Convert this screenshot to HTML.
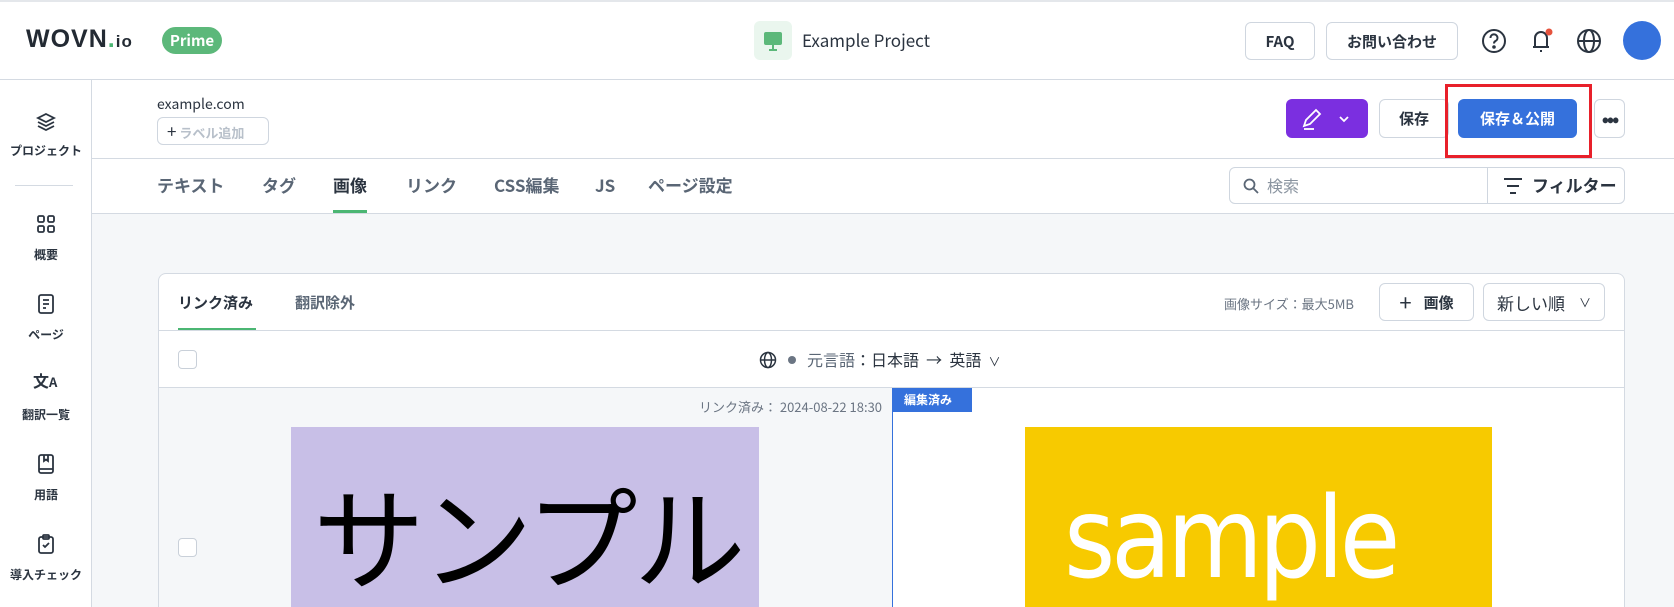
<!DOCTYPE html>
<html style="overflow:hidden;height:607px"><head><meta charset="utf-8"><style>
*{box-sizing:border-box;margin:0;padding:0}
body{width:1674px;height:607px;overflow:hidden;background:#fff;font-family:"Noto Sans CJK JP","Liberation Sans",sans-serif;color:#2b3440;position:relative}
.a{position:absolute}
.btn{position:absolute;border:1px solid #cfd6df;border-radius:6px;background:#fff;display:flex;align-items:center;justify-content:center;font-weight:bold;font-size:15px;color:#2b3440}
.sl{position:absolute;left:0;width:92px;text-align:center;font-size:12px;font-weight:bold;color:#2b3440}
.si{position:absolute;left:34px;width:24px;height:24px}
.tab{position:absolute;top:173px;font-size:17px;line-height:24px;color:#5a6675;font-weight:bold}
.cb{position:absolute;width:19px;height:19px;border:1px solid #c9d0d9;border-radius:4px;background:#fff}
</style></head><body>
<div class="a" style="left:0;top:0;width:1674px;height:2px;background:#e4e7eb"></div>
<div class="a" style="left:26px;top:25px;font-family:'Liberation Sans',sans-serif;font-size:25px;font-weight:bold;letter-spacing:1px;color:#232a33">WOVN<span style="color:#4bb673">.</span><span style="font-size:17px">io</span></div>
<div class="a" style="left:162px;top:27px;width:60px;height:27px;border-radius:14px;background:#5cb87a;color:#fff;font-weight:bold;font-size:15px;text-align:center;line-height:27px">Prime</div>
<div class="a" style="left:754px;top:21px;width:38px;height:39px;border-radius:6px;background:#eaf6ee"></div>
<svg class="a" style="left:762px;top:30px" width="22" height="22" viewBox="0 0 22 22"><rect x="2" y="2" width="18" height="13" rx="2" fill="#5cb87a"/><rect x="10" y="15" width="2" height="4" fill="#5cb87a"/><rect x="7" y="19" width="8" height="2" fill="#5cb87a"/></svg>
<div class="a" style="left:802px;top:27px;font-size:17px;color:#2b3440">Example Project</div>
<div class="btn" style="left:1245px;top:22px;width:70px;height:38px">FAQ</div>
<div class="btn" style="left:1326px;top:22px;width:132px;height:38px">お問い合わせ</div>
<svg class="a" style="left:1481px;top:28px" width="26" height="26" viewBox="0 0 26 26" fill="none" stroke="#2b3440" stroke-width="2"><circle cx="13" cy="13" r="11"/><path d="M9.5 10a3.5 3.5 0 1 1 5 3c-1 .6-1.5 1.2-1.5 2.5"/><circle cx="13" cy="19" r=".8" fill="#2b3440"/></svg>
<svg class="a" style="left:1528px;top:26px" width="28" height="28" viewBox="0 0 28 28" fill="none" stroke="#2b3440" stroke-width="2"><path d="M7 21V12a6 6 0 0 1 12 0v9M5 21h16M12 25h2"/><circle cx="21" cy="6" r="3.5" fill="#e5533d" stroke="none"/></svg>
<svg class="a" style="left:1576px;top:28px" width="26" height="26" viewBox="0 0 26 26" fill="none" stroke="#2b3440" stroke-width="2"><circle cx="13" cy="13" r="11"/><ellipse cx="13" cy="13" rx="5" ry="11"/><path d="M2 13h22"/></svg>
<div class="a" style="left:1623px;top:21px;width:38px;height:39px;border-radius:50%;background:#3571dc"></div>
<div class="a" style="left:0;top:79px;width:1674px;height:1px;background:#d4dae2"></div>
<div class="a" style="left:91px;top:79px;width:1px;height:528px;background:#d4dae2"></div>
<svg class="si" style="top:111px" viewBox="0 0 24 24" fill="none" stroke="#2b3440" stroke-width="1.8"><path d="M12 3l8 4-8 4-8-4z"/><path d="M4 11l8 4 8-4M4 15l8 4 8-4"/></svg>
<div class="sl" style="top:142px">プロジェクト</div>
<div class="a" style="left:15px;top:185px;width:58px;height:1px;background:#d4dae2"></div>
<svg class="si" style="top:212px" viewBox="0 0 24 24" fill="none" stroke="#2b3440" stroke-width="1.8"><rect x="4" y="4" width="6" height="6" rx="1.5"/><rect x="14" y="4" width="6" height="6" rx="1.5"/><rect x="4" y="14" width="6" height="6" rx="1.5"/><rect x="14" y="14" width="6" height="6" rx="1.5"/></svg>
<div class="sl" style="top:246px">概要</div>
<svg class="si" style="top:292px" viewBox="0 0 24 24" fill="none" stroke="#2b3440" stroke-width="1.8"><rect x="5" y="3" width="14" height="18" rx="2"/><path d="M9 8h6M9 12h6M9 16h3"/></svg>
<div class="sl" style="top:326px">ページ</div>
<div class="a" style="left:33px;top:368px;font-size:16px;font-weight:bold;color:#2b3440">文<span style="font-size:13px">A</span></div>
<div class="sl" style="top:406px">翻訳一覧</div>
<svg class="si" style="top:452px" viewBox="0 0 24 24" fill="none" stroke="#2b3440" stroke-width="1.8"><rect x="5" y="3" width="14" height="18" rx="2"/><path d="M5 17h14M10 3v6l2-1.5 2 1.5V3"/></svg>
<div class="sl" style="top:486px">用語</div>
<svg class="si" style="top:532px" viewBox="0 0 24 24" fill="none" stroke="#2b3440" stroke-width="1.8"><rect x="5" y="5" width="14" height="16" rx="2"/><rect x="9" y="3" width="6" height="4" rx="1"/><path d="M9 13l2 2 4-4"/></svg>
<div class="sl" style="top:566px">導入チェック</div>
<div class="a" style="left:157px;top:94px;font-size:14px;color:#2b3440">example.com</div>
<div class="a" style="left:157px;top:117px;width:112px;height:28px;border:1px solid #cfd6df;border-radius:6px;font-size:13px;color:#b8c0ca;font-weight:bold;line-height:26px;padding-left:9px"><span style="color:#2b3440;font-size:17px;font-weight:normal">+</span> ラベル追加</div>
<div class="a" style="left:1286px;top:99px;width:82px;height:39px;border-radius:6px;background:#7b2fe0"></div>
<svg class="a" style="left:1300px;top:107px" width="56" height="24" viewBox="0 0 56 24" fill="none" stroke="#fff" stroke-width="1.8"><path d="M4 19l2-6L16 3l4 4-10 10z"/><path d="M4 22h10"/><path d="M40 10l4 4 4-4"/></svg>
<div class="btn" style="left:1379px;top:99px;width:70px;height:39px">保存</div>
<div class="btn" style="left:1458px;top:99px;width:119px;height:39px;background:#3571dc;border-color:#3571dc;color:#fff">保存＆公開</div>
<div class="a" style="left:1445px;top:84px;width:147px;height:74px;border:3px solid #e8202a"></div>
<div class="btn" style="left:1594px;top:99px;width:31px;height:39px;font-size:19px;letter-spacing:-2px">•••</div>
<div class="a" style="left:92px;top:158px;width:1582px;height:1px;background:#d4dae2"></div>
<div class="tab" style="left:157px">テキスト</div>
<div class="tab" style="left:262px">タグ</div>
<div class="tab" style="left:333px;color:#2b3440">画像</div>
<div class="tab" style="left:406px">リンク</div>
<div class="tab" style="left:494px">CSS編集</div>
<div class="tab" style="left:595px">JS</div>
<div class="tab" style="left:648px">ページ設定</div>
<div class="a" style="left:333px;top:210px;width:34px;height:3px;background:#4bb673"></div>
<div class="a" style="left:1229px;top:167px;width:396px;height:37px;border:1px solid #cfd6df;border-radius:6px"></div>
<div class="a" style="left:1487px;top:167px;width:1px;height:37px;background:#cfd6df"></div>
<svg class="a" style="left:1242px;top:177px" width="18" height="18" viewBox="0 0 18 18" fill="none" stroke="#5a6675" stroke-width="1.8"><circle cx="7.5" cy="7.5" r="5"/><path d="M11 11l5 5"/></svg>
<div class="a" style="left:1267px;top:173px;font-size:16px;color:#8a94a0">検索</div>
<svg class="a" style="left:1502px;top:175px" width="22" height="22" viewBox="0 0 22 22" stroke="#2b3440" stroke-width="2"><path d="M2 4h18M5 11h12M8 18h6"/></svg>
<div class="a" style="left:1532px;top:172px;font-size:17px;font-weight:bold;color:#2b3440">フィルター</div>
<div class="a" style="left:92px;top:213px;width:1582px;height:1px;background:#d4dae2"></div>
<div class="a" style="left:92px;top:214px;width:1582px;height:393px;background:#f5f7f9"></div>
<div class="a" style="left:158px;top:273px;width:1467px;height:334px;background:#fff;border:1px solid #d4dae2;border-bottom:none;border-radius:8px 8px 0 0;overflow:hidden">
  <div class="a" style="left:19px;top:18px;font-size:15px;font-weight:bold;color:#2b3440">リンク済み</div>
  <div class="a" style="left:19px;top:54px;width:78px;height:2px;background:#4bb673"></div>
  <div class="a" style="left:136px;top:18px;font-size:15px;font-weight:bold;color:#5a6675">翻訳除外</div>
  <div class="a" style="left:1065px;top:20px;font-size:13px;color:#6b7583">画像サイズ：最大5MB</div>
  <div class="btn" style="left:1220px;top:9px;width:95px;height:38px;font-size:15px"><span style="font-size:22px;font-weight:normal;margin-right:12px">+</span>画像</div>
  <div class="btn" style="left:1324px;top:9px;width:122px;height:38px;font-weight:normal;font-size:17px">新しい順<span style="font-size:12px;margin-left:14px">∨</span></div>
  <div class="a" style="left:0;top:56px;width:1467px;height:1px;background:#d4dae2"></div>
  <div class="cb" style="left:19px;top:76px"></div>
  <svg class="a" style="left:600px;top:76px" width="40" height="20" viewBox="0 0 40 20" fill="none" stroke="#2b3440" stroke-width="1.5"><circle cx="9" cy="10" r="7.5"/><ellipse cx="9" cy="10" rx="3.5" ry="7.5"/><path d="M1.5 10h15"/><circle cx="33" cy="10" r="4" fill="#6b7583" stroke="none"/></svg>
  <div class="a" style="left:648px;top:73px;font-size:16px;color:#2b3440"><span style="color:#5a6675">元言語</span>：日本語 &nbsp;→&nbsp; 英語 &nbsp;<span style="font-size:12px">∨</span></div>
  <div class="a" style="left:0;top:113px;width:1467px;height:1px;background:#d4dae2"></div>
  <div class="a" style="left:0;top:114px;width:733px;height:220px;background:#f5f7f9"></div>
  <div class="a" style="left:733px;top:114px;width:1px;height:220px;background:#3571dc"></div>
  <div class="a" style="left:733px;top:114px;width:80px;height:24px;background:#3571dc;color:#fff;font-size:12px;font-weight:bold;line-height:24px;padding-left:12px">編集済み</div>
  <div class="a" style="left:490px;top:123px;width:233px;text-align:right;font-size:13px;color:#6b7583">リンク済み： 2024-08-22 18:30</div>
  <div class="cb" style="left:19px;top:264px"></div>
  <div class="a" style="left:132px;top:153px;width:468px;height:181px;background:#c8bfe7;overflow:hidden"><div class="a" style="left:22px;top:50px;font-size:112px;color:#000;font-family:'Noto Sans CJK JP',sans-serif;line-height:1;letter-spacing:-4px">サンプル</div></div>
  <div class="a" style="left:866px;top:153px;width:467px;height:181px;background:#f7ca00;overflow:hidden"><div class="a" style="left:39px;top:56px;font-size:112px;color:#fff;font-family:'DejaVu Sans',sans-serif;line-height:1;letter-spacing:-5px;transform:scaleX(.88);transform-origin:left">sample</div></div>
</div>
</body></html>
